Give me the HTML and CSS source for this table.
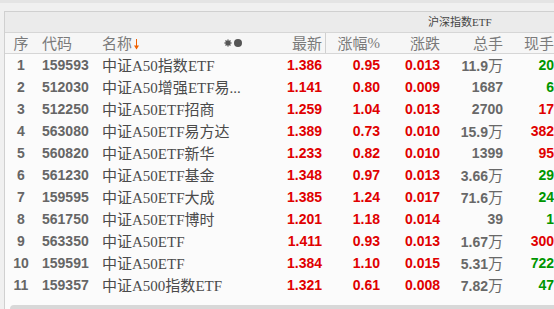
FILE: index.html
```html
<!DOCTYPE html>
<html lang="zh-CN">
<head>
<meta charset="utf-8">
<title>沪深指数ETF</title>
<link rel="stylesheet" href="styles.css">
</head>
<body>
<div class="topstrip"></div>
<div class="panel">
  <div class="group-row"><span class="group-label">沪深指数ETF</span></div>
  <div class="row head">
    <div class="c c-idx">序</div>
    <div class="c c-code">代码</div>
    <div class="c c-name head-name">
      <span class="sortlabel">名称<svg class="sort-arrow" width="5" height="12" viewBox="0 0 5 12"><path d="M2.5 1V11" stroke="#f06000" stroke-width="1"/><path d="M0 7.5L2.5 11.5L5 7.5Z" fill="#f06000"/></svg></span>
      <span class="icons"><svg width="19" height="10" viewBox="0 0 19 10"><g stroke="#555" stroke-width="1.4"><path d="M4 1.5V8.5M0.5 5H7.5M1.5 2.5L6.5 7.5M6.5 2.5L1.5 7.5"/></g><circle cx="4" cy="5" r="2" fill="#555"/><circle cx="14" cy="5" r="4" fill="#555"/></svg></span>
    </div>
    <div class="c c-num sep">最新</div>
    <div class="c c-num">涨幅<span class="lat">%</span></div>
    <div class="c c-num">涨跌</div>
    <div class="c c-num">总手</div>
    <div class="c c-num">现手</div>
  </div>

  <div class="row"><div class="c c-idx b">1</div><div class="c c-code b">159593</div><div class="c c-name">中证<span class="lat">A50</span>指数<span class="lat">ETF</span></div><div class="c c-num red">1.386</div><div class="c c-num red">0.95</div><div class="c c-num red">0.013</div><div class="c c-num gray">11.9<span class="wan">万</span></div><div class="c c-num green">20</div></div>
  <div class="row"><div class="c c-idx b">2</div><div class="c c-code b">512030</div><div class="c c-name">中证<span class="lat">A50</span>增强<span class="lat">ETF</span>易<span class="lat">...</span></div><div class="c c-num red">1.141</div><div class="c c-num red">0.80</div><div class="c c-num red">0.009</div><div class="c c-num gray">1687</div><div class="c c-num green">6</div></div>
  <div class="row"><div class="c c-idx b">3</div><div class="c c-code b">512250</div><div class="c c-name">中证<span class="lat">A50ETF</span>招商</div><div class="c c-num red">1.259</div><div class="c c-num red">1.04</div><div class="c c-num red">0.013</div><div class="c c-num gray">2700</div><div class="c c-num red">17</div></div>
  <div class="row"><div class="c c-idx b">4</div><div class="c c-code b">563080</div><div class="c c-name">中证<span class="lat">A50ETF</span>易方达</div><div class="c c-num red">1.389</div><div class="c c-num red">0.73</div><div class="c c-num red">0.010</div><div class="c c-num gray">15.9<span class="wan">万</span></div><div class="c c-num red">382</div></div>
  <div class="row"><div class="c c-idx b">5</div><div class="c c-code b">560820</div><div class="c c-name">中证<span class="lat">A50ETF</span>新华</div><div class="c c-num red">1.233</div><div class="c c-num red">0.82</div><div class="c c-num red">0.010</div><div class="c c-num gray">1399</div><div class="c c-num red">95</div></div>
  <div class="row"><div class="c c-idx b">6</div><div class="c c-code b">561230</div><div class="c c-name">中证<span class="lat">A50ETF</span>基金</div><div class="c c-num red">1.348</div><div class="c c-num red">0.97</div><div class="c c-num red">0.013</div><div class="c c-num gray">3.66<span class="wan">万</span></div><div class="c c-num green">29</div></div>
  <div class="row"><div class="c c-idx b">7</div><div class="c c-code b">159595</div><div class="c c-name">中证<span class="lat">A50ETF</span>大成</div><div class="c c-num red">1.385</div><div class="c c-num red">1.24</div><div class="c c-num red">0.017</div><div class="c c-num gray">71.6<span class="wan">万</span></div><div class="c c-num green">24</div></div>
  <div class="row"><div class="c c-idx b">8</div><div class="c c-code b">561750</div><div class="c c-name">中证<span class="lat">A50ETF</span>博时</div><div class="c c-num red">1.201</div><div class="c c-num red">1.18</div><div class="c c-num red">0.014</div><div class="c c-num gray">39</div><div class="c c-num green">1</div></div>
  <div class="row"><div class="c c-idx b">9</div><div class="c c-code b">563350</div><div class="c c-name">中证<span class="lat">A50ETF</span></div><div class="c c-num red">1.411</div><div class="c c-num red">0.93</div><div class="c c-num red">0.013</div><div class="c c-num gray">1.67<span class="wan">万</span></div><div class="c c-num red">300</div></div>
  <div class="row"><div class="c c-idx b">10</div><div class="c c-code b">159591</div><div class="c c-name">中证<span class="lat">A50ETF</span></div><div class="c c-num red">1.384</div><div class="c c-num red">1.10</div><div class="c c-num red">0.015</div><div class="c c-num gray">5.31<span class="wan">万</span></div><div class="c c-num green">722</div></div>
  <div class="row"><div class="c c-idx b">11</div><div class="c c-code b">159357</div><div class="c c-name">中证<span class="lat">A500</span>指数<span class="lat">ETF</span></div><div class="c c-num red">1.321</div><div class="c c-num red">0.61</div><div class="c c-num red">0.008</div><div class="c c-num gray">7.82<span class="wan">万</span></div><div class="c c-num green">47</div></div>

  <div class="scrollbar"></div>
</div>
</body>
</html>
```
FILE: styles.css
```css
html, body {
  margin: 0;
  padding: 0;
  width: 554px;
  height: 309px;
  overflow: hidden;
  background: #f0f0f0;
}
body {
  font-family: "Noto Sans CJK SC", sans-serif;
}
.topstrip {
  height: 3px;
  background: #e4e4e4;
}
.panel {
  margin-top: 8px;
  margin-left: 4px;
  border-top: 1px solid #d0d0d0;
  border-left: 1px solid #d0d0d0;
  background: #fbfbfb;
  height: 300px;
  overflow: hidden;
}
.group-row {
  height: 20px;
  background: #ebebeb;
  border-bottom: 1px solid #d6d6d6;
  display: flex;
  align-items: center;
  padding-left: 423px;
}
.group-label {
  font-size: 11px;
  color: #444;
  font-family: "Liberation Serif", "Noto Sans CJK SC", serif;
  line-height: 1;
}
.row {
  display: grid;
  grid-template-columns: 32px 60px 165px 64px 58px 60px 63px 51px;
  height: 22px;
  align-items: center;
}
.row.head {
  height: 20px;
  background: #f6f6f6;
  border-bottom: 1px solid #d6d6d6;
  align-items: stretch;
}
.c {
  white-space: nowrap;
  overflow: hidden;
  line-height: 22px;
}
.head .c {
  font-size: 15px;
  color: #7a7a7a;
  line-height: 20px;
  display: flex;
  align-items: center;
}
.head .c-num { justify-content: flex-end; }
.head .c-idx { justify-content: center; }
.c-idx { text-align: center; }
.c-code { padding-left: 5px; }
.c-name {
  padding-left: 5px;
  font-size: 15px;
  color: #4a4a4a;
}
.head-name {
  justify-content: space-between;
  padding-right: 19px;
}
.sortlabel { display: flex; align-items: center; }
.sort-arrow { margin-left: 2px; margin-top: 1px; }
.icons { display: flex; align-items: center; }
.c-num {
  text-align: right;
  padding-right: 4px;
  font-family: "Liberation Sans", sans-serif;
  font-weight: bold;
  font-size: 14px;
}
.head .c-num {
  font-family: "Noto Sans CJK SC", sans-serif;
  font-weight: normal;
}
.sep { border-right: 1px solid #d0d0d0; padding-right: 3px; }
.lat {
  font-family: "Liberation Serif", serif;
}
.b {
  font-family: "Liberation Sans", sans-serif;
  font-weight: bold;
  font-size: 14px;
  color: #666;
}
.red { color: #e00000; }
.green { color: #009600; }
.gray { color: #686868; }
.wan {
  font-family: "Noto Sans CJK SC", sans-serif;
  font-weight: normal;
  font-size: 15px;
}
.scrollbar {
  margin-top: 9px;
  margin-left: 5px;
  height: 8px;
  background: #d8d8d8;
  border-top-left-radius: 4px;
}
```
